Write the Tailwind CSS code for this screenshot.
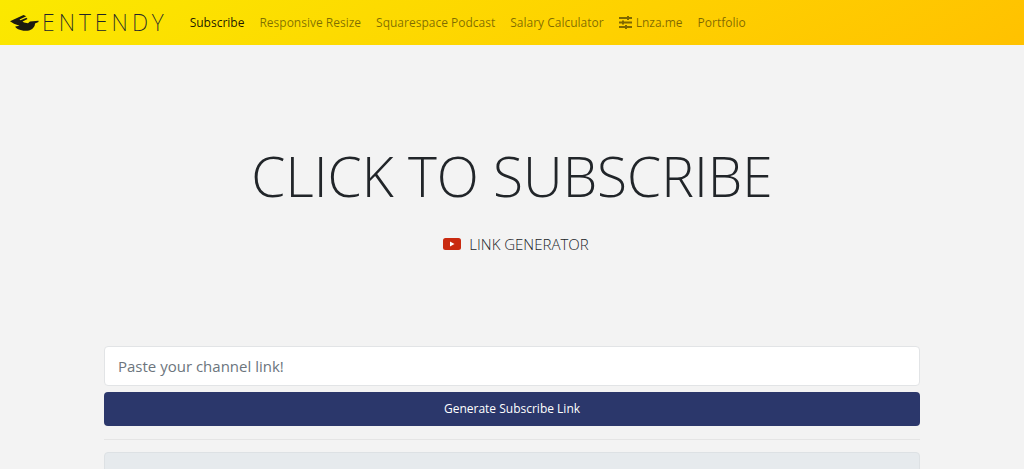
<!DOCTYPE html>
<html lang="en">
<head>
    <meta charset="UTF-8">
    <meta name="viewport" content="width=device-width, initial-scale=1.0">
    <title>Entendy - Click to Subscribe</title>
    <script src="https://cdn.jsdelivr.net/npm/@tailwindcss/browser@4"></script>
</head>
<body class="bg-[#f3f3f3] text-[#212529] font-['Open_Sans','Noto_Sans',sans-serif]">
    <!-- Navbar -->
    <header class="bg-linear-150 from-[#fbe900] to-[#ffc100] h-[45px] px-2.5 flex items-center">
        <a href="#" class="flex items-center mr-[22px]">
            <svg class="w-[29px] h-4 mr-[3px] shrink-0" viewBox="0 0 29 16" fill="#1c1a10">
                <path d="M0 6.300 L13.500 0 L16.300 1.200 L9.500 4.400 L10.500 5.200 L16.500 2.800 L17.500 4 L12.500 6.400 L14 7.600 L18 8.200 L20 6.500 L28.500 5.800 L28.500 7 L25 8.400 C25 13 20.500 15.800 15.500 15.800 C10 15.800 5 13 5.300 11.500 L9.500 10.800 L4 8.800 Z"/>
            </svg>
            <span class="pb-0.5 text-[23px] leading-7 font-extralight tracking-[4px] font-['Noto_Sans','Open_Sans',sans-serif]">ENTENDY</span>
        </a>
        <nav>
            <ul class="flex items-center gap-[15px] text-xs leading-5 text-black/50 whitespace-nowrap">
                <li><a href="#" class="text-black/90">Subscribe</a></li>
                <li><a href="#">Responsive Resize</a></li>
                <li><a href="#">Squarespace Podcast</a></li>
                <li><a href="#">Salary Calculator</a></li>
                <li>
                    <a href="#" class="flex items-center gap-1">
                        <svg class="w-[13px] h-[13px]" viewBox="0 0 13 13" fill="currentColor">
                            <path d="M0 1H8V0H10V1H13V3H10V4H8V3H0ZM0 5.500H3V4.500H5V5.500H13V7.500H5V8.500H3V7.500H0ZM0 10H6V9H8V10H13V12H8V13H6V12H0Z"/>
                        </svg>
                        Lnza.me
                    </a>
                </li>
                <li><a href="#">Portfolio</a></li>
            </ul>
        </nav>
    </header>

    <main class="max-w-[816px] mx-auto">
        <!-- Title -->
        <section class="text-center pt-24 pb-[90px]">
            <h1 class="text-[55px] leading-[70px] font-light">CLICK TO SUBSCRIBE</h1>
            <h2 class="mt-[21px] pl-2 flex items-center justify-center gap-2 text-[15px] leading-6 font-light">
                <svg class="w-[18px] h-3" viewBox="0 0 18 12">
                    <rect width="18" height="12" rx="2.500" fill="#c92a10"/>
                    <path d="M7 3.500L11.500 6L7 8.500Z" fill="#fff"/>
                </svg>
                LINK GENERATOR
            </h2>
        </section>

        <!-- Link form -->
        <form>
            <input type="text" aria-label="Channel link" placeholder="Paste your channel link!" class="block w-full h-10 px-[13px] bg-white border border-[#e2e4e6] rounded text-[15px] placeholder:text-[#6c757d]">
            <button type="button" class="block w-full h-[34px] mt-1.5 bg-[#2b376b] text-white text-xs rounded">Generate Subscribe Link</button>
            <hr class="mt-[13px] mb-3 border-[#e5e5e5]">
            <input type="text" aria-label="Generated link" readonly class="block w-full h-10 px-[13px] bg-[#e6eaed] border border-[#dde1e4] rounded text-[15px]">
        </form>
    </main>
</body>
</html>
